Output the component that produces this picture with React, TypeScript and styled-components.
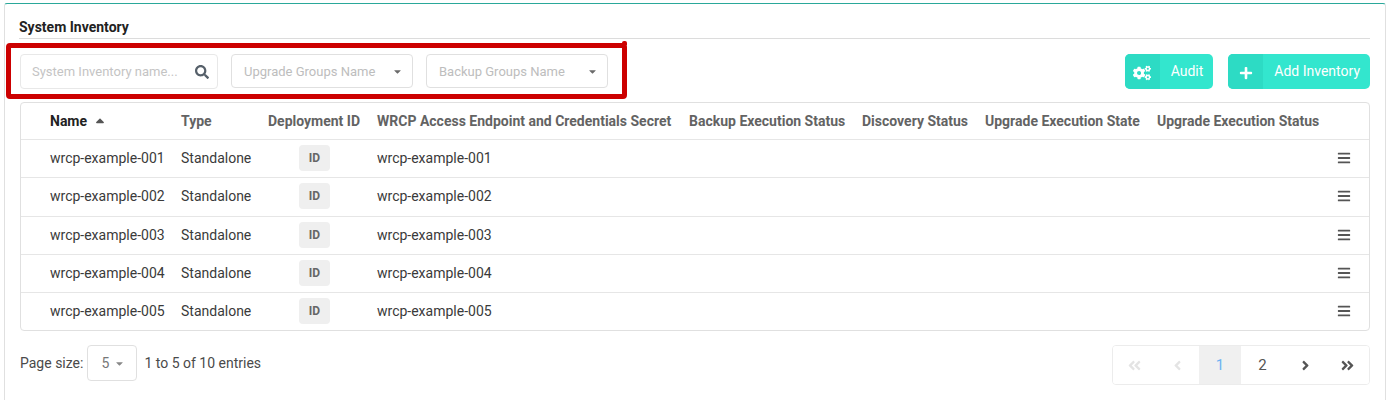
import React from 'react'
import styled, { createGlobalStyle } from 'styled-components'
import {
    FaAngleDoubleLeft,
    FaAngleDoubleRight,
    FaAngleLeft,
    FaAngleRight,
    FaBars,
    FaCaretDown,
    FaCogs,
    FaPlus,
    FaSearch,
    FaSortUp,
} from 'react-icons/fa'

const GlobalStyle = createGlobalStyle`
    html, body {
        margin: 0;
        background: #fff;
        font-family: Roboto, "Liberation Sans", sans-serif;
        font-size: 14px;
        color: #4a4a4a;
    }
`

const Panel = styled.div`
    position: relative;
    box-sizing: border-box;
    height: 397px;
    margin: 3px 5px 0 4px;
    padding: 13px 15px 0 14px;
    border: 1px solid #e0e0e0;
    border-top-color: #2aa89a;
    border-bottom: none;
    border-radius: 3px 3px 0 0;
`

const Title = styled.h2`
    margin: 0;
    height: 21px;
    font-size: 14px;
    line-height: 21px;
    font-weight: 700;
    color: #222;
    border-bottom: 1px solid #dcdcdc;
`

const Toolbar = styled.div`
    display: flex;
    align-items: flex-start;
    margin: 15px 0 14px 1px;
    height: 34px;
`

const SearchBox = styled.div`
    box-sizing: border-box;
    display: flex;
    align-items: center;
    justify-content: space-between;
    width: 198px;
    height: 35px;
    padding: 0 8px 0 11px;
    margin-right: 13px;
    border: 1px solid #e8e8e8;
    border-radius: 4px;
    font-size: 13px;
    color: #c4c4c4;
    svg {
        font-size: 14px;
        color: #56606a;
    }
`

const SelectBox = styled.div`
    box-sizing: border-box;
    display: flex;
    align-items: center;
    justify-content: space-between;
    width: 182px;
    height: 34px;
    padding: 0 9px 0 12px;
    margin-right: 13px;
    border: 1px solid #e0e0e0;
    border-radius: 4px;
    font-size: 13px;
    color: #bdbdbd;
    svg {
        font-size: 11px;
        color: #6b6b6b;
    }
`

const Actions = styled.div`
    display: flex;
    gap: 15px;
    margin-left: auto;
`

const ActionButton = styled.div`
    display: flex;
    height: 35px;
    border-radius: 5px;
    overflow: hidden;
    background: #33e6ce;
    color: #fff;
    font-size: 14px;
    line-height: 34px;
`

const ActionIcon = styled.span`
    display: flex;
    align-items: center;
    justify-content: center;
    width: 35px;
    padding-top: 2px;
    box-sizing: border-box;
    background: #2ddbc4;
    font-size: 14px;
`

const AuditIcon = styled(FaCogs)`
    font-size: 18px;
`

const ActionLabel = styled.span`
    padding: 0 10px 0 11px;
`

const Table = styled.div`
    margin-left: 1px;
    border: 1px solid #e0e0e0;
    border-radius: 4px;
`

const Row = styled.div<{ $head?: boolean }>`
    display: grid;
    grid-template-columns: 131px 87px 109px 312px 173px 123px 172px 1fr 18px 18px;
    align-items: center;
    box-sizing: border-box;
    height: ${p => (p.$head ? '36px' : '38.3px')};
    padding-left: 29px;
    padding-bottom: ${p => (p.$head ? '0' : '1px')};
    border-top: ${p => (p.$head ? 'none' : '1px solid #e6e6e6')};
    font-weight: ${p => (p.$head ? 700 : 400)};
    color: ${p => (p.$head ? '#636363' : '#3a3a3a')};
    white-space: nowrap;
`

const NameHead = styled.span`
    display: flex;
    align-items: center;
    gap: 6px;
    color: #222;
    svg {
        font-size: 14px;
        color: #555;
        margin-top: 5px;
    }
`

const IdBadge = styled.span`
    display: block;
    width: 31px;
    height: 26px;
    margin-left: 31px;
    border-radius: 4px;
    background: #efefef;
    color: #666;
    font-size: 12px;
    font-weight: 700;
    line-height: 26px;
    text-align: center;
`

const RowMenu = styled.span`
    display: flex;
    justify-content: flex-end;
    font-size: 14px;
    color: #555;
`

const Footer = styled.div`
    display: flex;
    align-items: flex-start;
    justify-content: space-between;
    margin: 14px 0 0 1px;
`

const PageInfo = styled.div`
    display: flex;
    align-items: center;
    color: #4a4a4a;
`

const PageSize = styled.span`
    box-sizing: border-box;
    display: flex;
    align-items: center;
    justify-content: space-between;
    width: 50px;
    height: 36px;
    margin: 0 7px 0 4px;
    padding: 0 11px 0 13px;
    border: 1px solid #e0e0e0;
    border-radius: 4px;
    color: #777;
    svg {
        font-size: 11px;
        color: #888;
    }
`

const Pager = styled.div`
    display: flex;
    height: 40px;
    box-sizing: border-box;
    border: 1px solid #ececec;
    border-radius: 4px;
    overflow: hidden;
`

const PageButton = styled.span<{ $active?: boolean; $disabled?: boolean }>`
    display: flex;
    align-items: center;
    justify-content: center;
    width: 42.6px;
    font-size: 15px;
    background: ${p => (p.$active ? '#f0f0f0' : '#fff')};
    color: ${p => (p.$active ? '#6db3f2' : p.$disabled ? '#e4e4e4' : '#555')};
`

const Highlight = styled.div`
    position: absolute;
    left: 1px;
    top: 39px;
    width: 621px;
    height: 56px;
    box-sizing: border-box;
    border: 5px solid #cc0000;
    border-radius: 4px;
    &::after {
        content: '';
        position: absolute;
        top: -7px;
        right: -5px;
        width: 5px;
        height: 4px;
        border-radius: 2px 2px 0 0;
        background: #cc0000;
    }
`

const rows = ['wrcp-example-001', 'wrcp-example-002', 'wrcp-example-003', 'wrcp-example-004', 'wrcp-example-005']

const App = () => {
    return (
        <>
            <GlobalStyle />
            <Panel>
                <Title>System Inventory</Title>
                <Toolbar>
                    <SearchBox>
                        System Inventory name...
                        <FaSearch />
                    </SearchBox>
                    <SelectBox>
                        Upgrade Groups Name
                        <FaCaretDown />
                    </SelectBox>
                    <SelectBox>
                        Backup Groups Name
                        <FaCaretDown />
                    </SelectBox>
                    <Actions>
                        <ActionButton>
                            <ActionIcon><AuditIcon /></ActionIcon>
                            <ActionLabel>Audit</ActionLabel>
                        </ActionButton>
                        <ActionButton>
                            <ActionIcon><FaPlus /></ActionIcon>
                            <ActionLabel>Add Inventory</ActionLabel>
                        </ActionButton>
                    </Actions>
                </Toolbar>
                <Table>
                    <Row $head>
                        <NameHead>Name <FaSortUp /></NameHead>
                        <span>Type</span>
                        <span>Deployment ID</span>
                        <span>WRCP Access Endpoint and Credentials Secret</span>
                        <span>Backup Execution Status</span>
                        <span>Discovery Status</span>
                        <span>Upgrade Execution State</span>
                        <span>Upgrade Execution Status</span>
                    </Row>
                    {rows.map(name => (
                        <Row key={name}>
                            <span>{name}</span>
                            <span>Standalone</span>
                            <IdBadge>ID</IdBadge>
                            <span>{name}</span>
                            <span />
                            <span />
                            <span />
                            <span />
                            <RowMenu><FaBars /></RowMenu>
                        </Row>
                    ))}
                </Table>
                <Footer>
                    <PageInfo>
                        Page size:
                        <PageSize>5 <FaCaretDown /></PageSize>
                        1 to 5 of 10 entries
                    </PageInfo>
                    <Pager>
                        <PageButton $disabled><FaAngleDoubleLeft /></PageButton>
                        <PageButton $disabled><FaAngleLeft /></PageButton>
                        <PageButton $active>1</PageButton>
                        <PageButton>2</PageButton>
                        <PageButton><FaAngleRight /></PageButton>
                        <PageButton><FaAngleDoubleRight /></PageButton>
                    </Pager>
                </Footer>
                <Highlight />
            </Panel>
        </>
    )
}

export default App
